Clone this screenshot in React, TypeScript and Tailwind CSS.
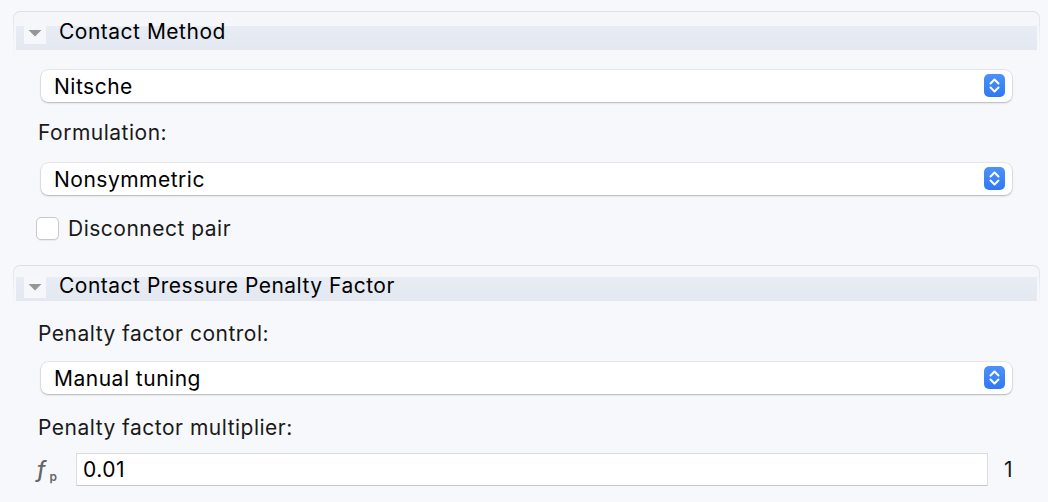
import React from "react";

function SectionHeader({
  title,
  band = "top",
}: {
  title: string;
  band?: "top" | "tight";
}) {
  return (
    <div className="rounded-t-[7px] bg-gradient-to-b from-[#d9e1ed] via-[#eef1f6] to-[#f7f8fb] px-px pt-px">
      <div className="rounded-t-[6px] bg-gradient-to-b from-[#f4f6f9] to-[#f7f8fb] px-[2px] pt-[10px] pb-[10px]">
        <div
          className={
            band === "top"
              ? "flex h-[28px] items-start bg-[linear-gradient(to_bottom,transparent_4px,#e8ecf4_4px,#e3e8f1_100%)]"
              : "flex h-[25px] items-start bg-[linear-gradient(to_bottom,transparent_1px,#e8ecf4_1px,#e3e8f1_100%)]"
          }
        >
          <div className="ml-2 size-[22px] bg-[#f5f7fa]">
            <svg width="22" height="22" viewBox="0 0 22 22">
              <polygon points="4.5,8 17.5,8 11,14.5" fill="#969696" />
            </svg>
          </div>
          <span className="ml-[13px] text-[21px] leading-[20px] tracking-[0.5px] text-black">
            {title}
          </span>
        </div>
      </div>
    </div>
  );
}

function Select({ value }: { value: string }) {
  return (
    <div className="mx-[28px] flex h-8 items-center justify-between rounded-[7px] bg-white pl-[13px] pr-[7px] shadow-[0_0_0_0.5px_rgba(0,0,0,0.12),0_1px_2px_rgba(0,0,0,0.22)]">
      <span className="mt-[2px] text-[21px] tracking-[0.5px] text-black">
        {value}
      </span>
      <div className="mt-[-1px] flex h-[23px] w-[21px] items-center justify-center rounded-[5px] bg-gradient-to-b from-[#4d92f8] to-[#2e78f5]">
        <svg width="21" height="23" viewBox="0 0 21 23" fill="none">
          <polyline
            points="6.5,9.5 10.5,5.5 14.5,9.5"
            stroke="white"
            strokeWidth="2"
            strokeLinecap="round"
            strokeLinejoin="round"
          />
          <polyline
            points="6.5,13.5 10.5,17.5 14.5,13.5"
            stroke="white"
            strokeWidth="2"
            strokeLinecap="round"
            strokeLinejoin="round"
          />
        </svg>
      </div>
    </div>
  );
}

function Label({ children }: { children: React.ReactNode }) {
  return (
    <div className="pt-px pl-[25px] text-[21px] leading-[24px] tracking-[0.5px] text-[#1a1a1a]">
      {children}
    </div>
  );
}

export default function App() {
  return (
    <div className="min-h-screen bg-[#f7f8fb] pt-[11px] pr-[8px] pb-4 pl-[13px] font-['Inter',sans-serif] antialiased">
      <SectionHeader title="Contact Method" />
      <div className="mt-[10px]">
        <Select value="Nitsche" />
      </div>
      <div className="mt-[18px]">
        <Label>Formulation:</Label>
      </div>
      <div className="mt-[18px]">
        <Select value="Nonsymmetric" />
      </div>
      <div className="mt-[21px] flex h-6 items-center pl-[23px]">
        <div className="size-[23px] rounded-[5px] border border-[#c9c9c9] bg-white shadow-[0_1px_1px_rgba(0,0,0,0.06)]" />
        <span className="mt-px ml-[9px] text-[21px] tracking-[0.5px] text-[#1a1a1a]">
          Disconnect pair
        </span>
      </div>

      <div className="mt-[25px]">
        <SectionHeader title="Contact Pressure Penalty Factor" band="tight" />
      </div>
      <div className="mt-[10px]">
        <Label>Penalty factor control:</Label>
      </div>
      <div className="mt-[16px]">
        <Select value="Manual tuning" />
      </div>
      <div className="mt-[21px]">
        <Label>Penalty factor multiplier:</Label>
      </div>
      <div className="mt-[13px] flex items-center pl-[24px]">
        <div className="flex w-[39px] items-baseline text-[#666666]">
          <span className="text-[22px] font-medium italic">f</span>
          <span className="ml-[4px] translate-y-[4px] text-[12px] font-semibold">
            p
          </span>
        </div>
        <div className="flex h-[33px] flex-1 items-center border border-[#dcdcdc] border-b-[#c8c8c8] bg-white pl-[6px]">
          <span className="mt-px text-[21px] tracking-[0.5px] text-black">
            0.01
          </span>
        </div>
        <span className="mt-px w-[52px] pl-[16px] text-[21px] text-[#1a1a1a]">
          1
        </span>
      </div>
    </div>
  );
}
